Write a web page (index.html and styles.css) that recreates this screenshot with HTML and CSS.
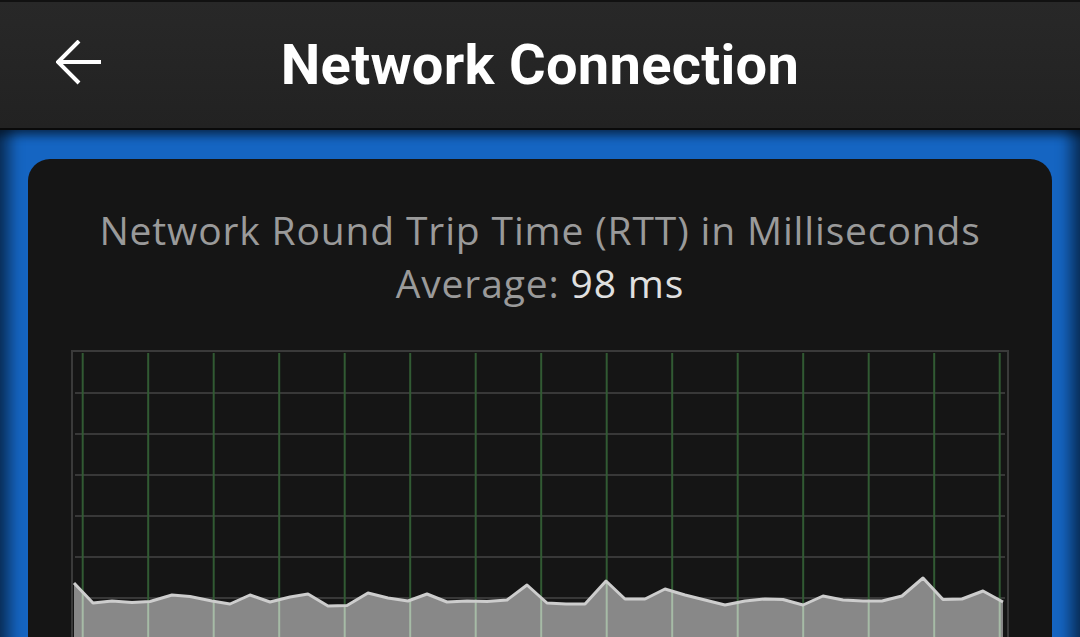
FILE: index.html
```html
<!DOCTYPE html>
<html>
<head>
<meta charset="utf-8">
<link rel="stylesheet" href="styles.css">
</head>
<body>
<header class="appbar">
  <div class="appbar-left">
    <svg class="back" width="48" height="48" viewBox="0 0 48 48">
      <path d="M45 22H4M23 1L2 22L23 43" fill="none" stroke="#ffffff" stroke-width="4" stroke-linecap="butt" stroke-linejoin="miter"/>
    </svg>
  </div>
  <h1 class="title">Network Connection</h1>
  <div></div>
</header>
<main class="stage">
  <section class="card">
    <div class="caption">
      <div>Network Round Trip Time (RTT) in Milliseconds</div>
      <div>Average: <span class="value">98 ms</span></div>
    </div>
    <svg class="chart" width="938" height="300" viewBox="0 0 938 300">
      <defs>
        <clipPath id="fillclip">
          <polygon points="3,300 3,233 22,253 41,251 61,252.5 79,251.5 101,245 119,246.5 141,251 159,254 179,245 199,252 219,247 237,244 257,256 276,255.5 297,243 317,248 337,251 356,244 376,252 396,251 416,251.5 436,250 456,235 476,253 495,254 514,254 535,231 554,249 574,249 594,239 614,245 634,250 654,255 674,251 694,249 712,249.5 732,255 752,246 772,250 792,251 811,251 831,246 852,228 872,249.5 891,249 912,241 932,252 932,300"/>
        </clipPath>
      </defs>
      <g stroke="#383838" stroke-width="2">
        <line x1="4" y1="43" x2="934" y2="43"/>
        <line x1="4" y1="84" x2="934" y2="84"/>
        <line x1="4" y1="125" x2="934" y2="125"/>
        <line x1="4" y1="166" x2="934" y2="166"/>
        <line x1="4" y1="207" x2="934" y2="207"/>
        <line x1="4" y1="248" x2="934" y2="248"/>
        <line x1="4" y1="289" x2="934" y2="289"/>
      </g>
      <g stroke="#315a33" stroke-width="2">
        <line x1="11.7" y1="3" x2="11.7" y2="300"/>
        <line x1="77.2" y1="3" x2="77.2" y2="300"/>
        <line x1="142.7" y1="3" x2="142.7" y2="300"/>
        <line x1="208.2" y1="3" x2="208.2" y2="300"/>
        <line x1="273.7" y1="3" x2="273.7" y2="300"/>
        <line x1="339.2" y1="3" x2="339.2" y2="300"/>
        <line x1="404.7" y1="3" x2="404.7" y2="300"/>
        <line x1="470.2" y1="3" x2="470.2" y2="300"/>
        <line x1="535.7" y1="3" x2="535.7" y2="300"/>
        <line x1="601.2" y1="3" x2="601.2" y2="300"/>
        <line x1="666.7" y1="3" x2="666.7" y2="300"/>
        <line x1="732.2" y1="3" x2="732.2" y2="300"/>
        <line x1="797.7" y1="3" x2="797.7" y2="300"/>
        <line x1="863.2" y1="3" x2="863.2" y2="300"/>
        <line x1="928.7" y1="3" x2="928.7" y2="300"/>
      </g>
      <rect x="0" y="0" width="938" height="300" fill="#888888" clip-path="url(#fillclip)"/>
      <g stroke="#a6bba6" stroke-width="2" clip-path="url(#fillclip)">
        <line x1="11.7" y1="3" x2="11.7" y2="300"/>
        <line x1="77.2" y1="3" x2="77.2" y2="300"/>
        <line x1="142.7" y1="3" x2="142.7" y2="300"/>
        <line x1="208.2" y1="3" x2="208.2" y2="300"/>
        <line x1="273.7" y1="3" x2="273.7" y2="300"/>
        <line x1="339.2" y1="3" x2="339.2" y2="300"/>
        <line x1="404.7" y1="3" x2="404.7" y2="300"/>
        <line x1="470.2" y1="3" x2="470.2" y2="300"/>
        <line x1="535.7" y1="3" x2="535.7" y2="300"/>
        <line x1="601.2" y1="3" x2="601.2" y2="300"/>
        <line x1="666.7" y1="3" x2="666.7" y2="300"/>
        <line x1="732.2" y1="3" x2="732.2" y2="300"/>
        <line x1="797.7" y1="3" x2="797.7" y2="300"/>
        <line x1="863.2" y1="3" x2="863.2" y2="300"/>
        <line x1="928.7" y1="3" x2="928.7" y2="300"/>
      </g>
      <polyline fill="none" stroke="#cdcdcd" stroke-width="3" stroke-linejoin="round" points="3,233 22,253 41,251 61,252.5 79,251.5 101,245 119,246.5 141,251 159,254 179,245 199,252 219,247 237,244 257,256 276,255.5 297,243 317,248 337,251 356,244 376,252 396,251 416,251.5 436,250 456,235 476,253 495,254 514,254 535,231 554,249 574,249 594,239 614,245 634,250 654,255 674,251 694,249 712,249.5 732,255 752,246 772,250 792,251 811,251 831,246 852,228 872,249.5 891,249 912,241 932,252"/>
      <rect x="1" y="1" width="936" height="400" fill="none" stroke="#3a3a3a" stroke-width="2"/>
    </svg>
  </section>
</main>
</body>
</html>
```

FILE: styles.css
```css
html, body {
  margin: 0;
  padding: 0;
}
body {
  width: 1080px;
  height: 637px;
  overflow: hidden;
  background: #1565c2;
  font-family: "Open Sans", "Noto Sans", sans-serif;
  display: flex;
  flex-direction: column;
}
.appbar {
  height: 126px;
  flex: 0 0 auto;
  border-top: 2px solid #111111;
  border-bottom: 2px solid #0a0a0a;
  background: linear-gradient(#282828, #222222);
  display: grid;
  grid-template-columns: 1fr auto 1fr;
  align-items: center;
}
.appbar-left {
  display: flex;
  align-items: center;
  padding-left: 56px;
}
.back {
  display: block;
  margin-top: -2px;
}
.title {
  margin: 0;
  font-family: Roboto, "Liberation Sans", sans-serif;
  font-weight: 700;
  font-size: 56px;
  color: #ffffff;
  letter-spacing: 0.3px;
  margin-top: 0;
}
.stage {
  flex: 1 1 auto;
  padding: 29px 28px 0 28px;
  box-shadow: inset 0 10px 10px -4px rgba(0,0,0,0.45), inset 16px 0 14px -6px rgba(0,0,0,0.5), inset -16px 0 14px -6px rgba(0,0,0,0.5);
  display: flex;
  flex-direction: column;
}
.card {
  flex: 1 1 auto;
  background: #151515;
  border-radius: 22px 22px 0 0;
  padding: 44px 43px 0 43px;
  display: flex;
  flex-direction: column;
  align-items: center;
}
.caption {
  color: #9a9a9a;
  font-size: 39px;
  line-height: 53px;
  letter-spacing: 0.85px;
  text-align: center;
}
.value {
  color: #e0e0e0;
}
.chart {
  display: block;
  margin-top: 41px;
  flex: 0 0 auto;
}
```
